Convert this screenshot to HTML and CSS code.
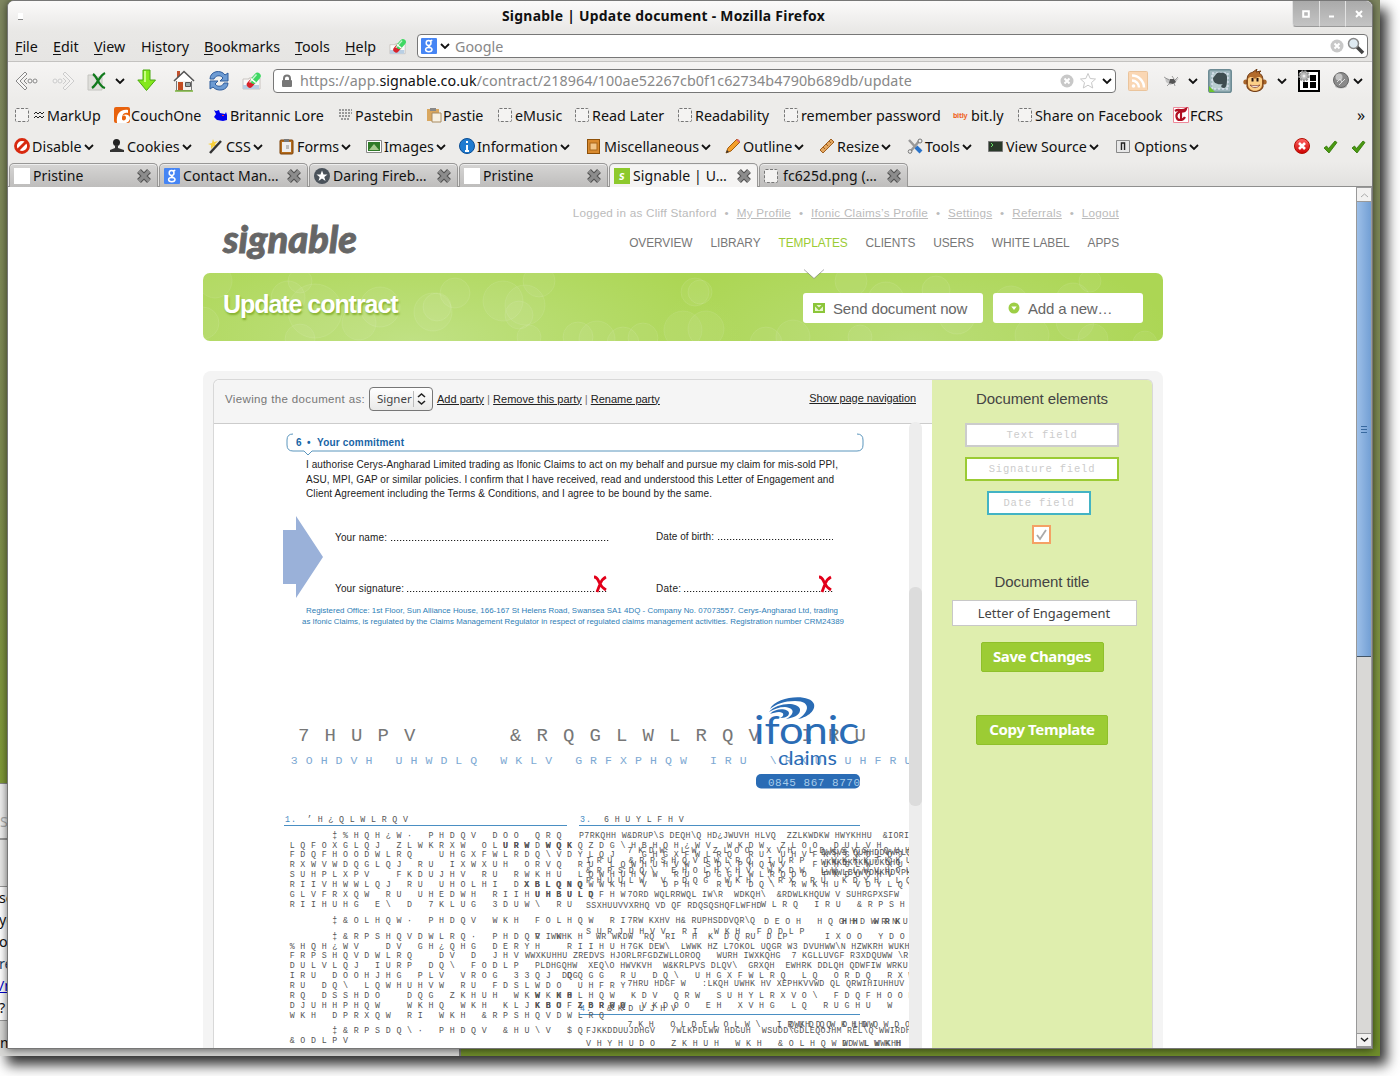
FILE: index.html
```html
<!DOCTYPE html>
<html lang="en">
<head>
<meta charset="utf-8">
<title>Signable | Update document</title>
<link rel="stylesheet" href="styles.css">
</head>
<body>
<svg class="defs" width="0" height="0">
  <defs>
    <linearGradient id="red" x2="0" y2="1"><stop stop-color="#f66"/><stop offset="1" stop-color="#c00"/></linearGradient>
    <symbol id="dash" viewBox="0 0 16 16"><rect x=".5" y="1.5" width="13" height="13" rx="1" fill="#f4f3f2" stroke="#777" stroke-dasharray="3 1.5"/></symbol>
    <symbol id="chev" viewBox="0 0 10 8"><path d="M1 2l4 4 4-4" fill="none" stroke="#111" stroke-width="1.8"/></symbol>
    <symbol id="x" viewBox="0 0 16 16"><path d="M3 3l10 10M13 3L3 13" stroke="#505050" stroke-width="5.4"/><path d="M3 3l10 10M13 3l-10 10" stroke="#8c8c8c" stroke-width="3.4"/></symbol>
    <symbol id="pill" viewBox="0 0 20 18"><path d="M1 7h6v-1h11v11H1z" fill="#fafafa" stroke="#c9c4c0"/><path d="M1 13h16v4H1z" fill="#b9cfe4"/><path d="M8 12.500l3-3.500" stroke="#d8232a" stroke-width="6.500" stroke-linecap="round"/><path d="M11.500 8.500l4-4.500" stroke="#3fd862" stroke-width="6.500" stroke-linecap="round"/><path d="M8.700 6.700l5 4" stroke="#fff" stroke-width="1.500"/><path d="M7.500 10.500l7-8" stroke="#fff" stroke-opacity=".7" stroke-width="1.500"/></symbol>
    <symbol id="g" viewBox="0 0 16 16"><rect width="16" height="16" rx="1" fill="#4685f4"/><g fill="none" stroke="#fff" stroke-width="1.5"><circle cx="7.6" cy="5" r="2.4"/><ellipse cx="7.8" cy="11.6" rx="3.2" ry="2.2"/><path d="M9 3l2.3-.8M8 7.4c-2 1 .8 1 1.6 2.4"/></g></symbol>
    <symbol id="clear" viewBox="0 0 14 14"><circle cx="7" cy="7" r="6.5" fill="#c8c8c8"/><path d="M4.5 4.5l5 5M9.5 4.5l-5 5" stroke="#fff" stroke-width="2"/></symbol>
    <symbol id="tick" viewBox="0 0 16 16"><path d="M2 9l2.5-2 2 2.5L13 2l2 1.5L7 14z" fill="#4b9a12" stroke="#2f7404" stroke-width=".8"/></symbol>
  </defs>
</svg>
<div class="desktop">
  <div class="back-window">
    <div class="back-head"><span>S</span></div>
    <div class="back-tools"></div>
    <div class="back-text"><p>se</p><p>yo</p><p>op</p><p class="blue">re</p><p class="link">/m</p><p>?</p></div>
    <div class="back-foot">m</div>
  </div>
  <main class="window">
    <header class="titlebar">
      <i class="app-dot"></i>
      <b>Signable | Update document - Mozilla Firefox</b>
      <div class="controls"><span><svg width="8" height="8"><path d="M1.2 1.2h5.6v5.6H1.2z" fill="none" stroke="#fff" stroke-width="2"/></svg></span><span><svg width="8" height="8"><path d="M1 6.5h5" stroke="#fff" stroke-width="2"/></svg></span><span><svg width="8" height="8"><path d="M1 1l6 6M7 1L1 7" stroke="#fff" stroke-width="2"/></svg></span></div>
    </header>
    <nav class="menubar">
      <span><u>F</u>ile</span><span><u>E</u>dit</span><span><u>V</u>iew</span><span>Hi<u>s</u>tory</span><span><u>B</u>ookmarks</span><span><u>T</u>ools</span><span><u>H</u>elp</span>
      <svg width="18" height="17"><use href="#pill"/></svg>
      <div class="search"><svg width="16" height="16"><use href="#g"/></svg><svg width="10" height="8"><use href="#chev"/></svg><span>Google</span><svg class="push" width="14" height="14"><use href="#clear"/></svg>
        <svg width="18" height="18"><path d="M10 10l6 6" stroke="#444" stroke-width="3.5"/><circle cx="6.5" cy="6.5" r="5" fill="#dfeaf2" stroke="#888" stroke-width="1.5"/></svg></div>
    </nav>
    <div class="navbar">
      <svg width="24" height="22" viewBox="0 0 24 22" fill="#f7f6f5" stroke="#888"><path d="M10 2L1 11l9 9 2-2-7-7 7-7z"/><path d="M12 8l-3 3 3 3" fill="none"/><circle cx="15" cy="11" r="2"/><circle cx="20" cy="11" r="2"/></svg>
      <svg width="24" height="22" viewBox="0 0 24 22" fill="#f4f3f2" stroke="#ccc"><path d="M13 2l9 9-9 9-2-2 7-7-7-7z"/><path d="M11 8l3 3-3 3" fill="none"/><circle cx="8" cy="11" r="2"/><circle cx="3" cy="11" r="2"/></svg>
      <svg width="20" height="22"><path d="M1 5h5l1 2h8v13H1z" fill="#dfdfdb" stroke="#c4c4c0"/><path d="M6 4c5 3 5 12 12 14M18 3C12 6 11 14 5 18" fill="none" stroke="#117a1d" stroke-width="2.3"/></svg>
      <svg width="10" height="8"><use href="#chev"/></svg>
      <svg width="20" height="24"><path d="M6 1h7v10h5.500L9.500 21.500.8 11H6z" fill="#84e81c" stroke="#4aa910"/><path d="M8 2v11" stroke="#c8ff80" stroke-width="2"/></svg>
      <svg width="22" height="22"><path d="M4 1h3v6H4z" fill="#c0522f"/><path d="M3.500 10h15v10.500h-15z" fill="#f5f3ee" stroke="#777"/><path d="M1 11l10-9.500L21 11" fill="#fff" stroke="#555" stroke-width="1.600"/><path d="M5 12h5v8H5z" fill="#c34e22"/><path d="M12.500 12.500h5v4h-5z" fill="#9aa" stroke="#555"/><path d="M2 21h18" stroke="#7bb33c" stroke-width="1.500"/></svg>
      <svg width="22" height="22"><g fill="#6d9bd3" stroke="#2f5c9c"><path d="M2 9c0-8 11-10 15-4l3-2v8h-8l3-3c-3-4-8-2-9 1z"/><path d="M20 13c0 8-11 9-15 4l-3 2v-8h8l-3 3c3 4 8 2 9-1z"/></g></svg>
      <svg width="20" height="22"><use href="#pill"/></svg>
      <div class="urlbar"><svg width="12" height="14"><path d="M3 7V4.500a3 3 0 0 1 6 0V7" fill="none" stroke="#777" stroke-width="2"/><rect x="1" y="6" width="10" height="7" rx="1" fill="#777"/></svg>
        <span class="url">https://app.<em>signable.co.uk</em>/contract/218964/100ae52267cb0f1c62734b4790b689db/update</span>
        <svg class="push" width="14" height="14"><use href="#clear"/></svg><svg width="18" height="18"><path d="M9 1.500l2.200 5 5.300.5-4 3.600 1.200 5.400L9 13.200 4.300 16l1.200-5.400-4-3.600 5.300-.5z" fill="#fff" stroke="#c8c8c8"/></svg><svg width="10" height="8"><use href="#chev"/></svg></div>
      <svg width="20" height="20"><rect x=".5" y=".5" width="19" height="19" rx="1" fill="#fad7b4" stroke="#eac49c"/><g fill="none" stroke="#fff" stroke-width="2.500"><path d="M4 9.500a7 7 0 0 1 7 7M4 4.500a12 12 0 0 1 12 12"/></g><circle cx="5.500" cy="15" r="1.800" fill="#fff"/></svg>
      <svg width="18" height="16"><path d="M2 5l9 2 5-2-4 5-5 2-4-3z" fill="#c4c4c4"/><path d="M7 6l4 0 2 3-3 2-4-1z" fill="#555"/><path d="M1 4l5 3M9 3l2 3M15 4l-3 3M4 13l3-3M12 13l-1-3" stroke="#888" stroke-width=".8"/></svg>
      <svg width="10" height="8"><use href="#chev"/></svg>
      <svg width="24" height="24"><rect x=".8" y=".8" width="22.400" height="22.400" rx="2" fill="#9fb7bd" stroke="#6d8b94" stroke-width="1.600"/><rect x="4" y="4" width="16" height="16" fill="#b9cdd1" stroke="#eef" stroke-dasharray="2 2"/><path d="M5 9l4-5c6-1 10 0 10 4 0 5 0 11-3 11-4 0-3-3-1-4-6 1-10-1-10-6z" fill="#3f4d50"/><path d="M1 23v-6l6 6z" fill="#6cc52e"/></svg>
      <svg width="24" height="24"><circle cx="2.800" cy="13" r="2.500" fill="#a8662b"/><circle cx="21.200" cy="13" r="2.500" fill="#a8662b"/><path d="M4 12C4 3 9 4 10 3l4-3-1 3 5-1-2 2c4 2 4 6 4 9v5c-2 6-14 6-16 0z" fill="#b26b2c" stroke="#6c3913"/><path d="M5 10c2-3 5-2 7 0 2-2 5-3 7 0v5c0 9-14 9-14 0z" fill="#fbcf88"/><path d="M9.500 9v3.500M14.500 9v3.500" stroke="#211" stroke-width="2"/><path d="M7 16c3 3.500 7 3.500 10 0-2.500 1-7.500 1-10 0z" fill="#fff" stroke="#843" stroke-width=".8"/></svg>
      <svg width="10" height="8"><use href="#chev"/></svg>
      <svg width="22" height="22"><rect x="1" y="1" width="20" height="20" fill="#fff" stroke="#000" stroke-width="2"/><path d="M5 12h5v6H5zm7-7h6v6h-6zm0 7h6v6h-6z"/><circle cx="6" cy="6" r="4.500" fill="#bbb" stroke="#999" stroke-width="2.500" stroke-dasharray="2 1"/><circle cx="6" cy="6" r="1.500" fill="#eee"/></svg>
      <svg width="16" height="18"><ellipse cx="8" cy="14" rx="6" ry="2.500" fill="#bbb"/><circle cx="8" cy="8" r="7.500" fill="#8a8a8a" stroke="#666"/><circle cx="6" cy="5" r="3.500" fill="#c5c5c5"/><path d="M4 10l3-3 2 3 3-3M6 13l3-3" stroke="#ddd" fill="none"/></svg>
      <svg width="10" height="8"><use href="#chev"/></svg>
    </div>
    <div class="bookmarks">
      <span><svg width="16" height="16"><use href="#dash"/></svg><svg width="14" height="10"><path d="M2 4l2-2 2 2 2-2 2 2 2-2M2 8l2-2 2 2 2-2 2 2 2-2" fill="none" stroke="#222"/></svg>MarkUp</span>
      <span><svg width="16" height="16"><rect width="16" height="16" rx="2" fill="#e8620d"/><path d="M3 16C2 7 6 2 14 3v3C8 5 8 10 8 12s4 2 4-1-3-3-4-1c1-4 8-3 8 1 0 3-3 5-5 5z" fill="#fff"/></svg>CouchOne</span>
      <span><svg width="16" height="16"><path d="M1 3l2 1 3-1 1 3 5 1 1-2 1 3v5l-4 1-6-1-3-3 2-3z" fill="#00e"/><path d="M9 8h2v1H9z" fill="#f33"/></svg>Britannic Lore</span>
      <span><svg width="16" height="16"><path d="M1 3h13M1 6h13M1 9h12M3 12h8" stroke="#999" stroke-width="2" stroke-dasharray="2 1"/></svg>Pastebin</span>
      <span><svg width="16" height="16"><path d="M1 2h12v12H1z" fill="#d9a75f"/><path d="M4 1h6v3H4z" fill="#888"/><path d="M6 6h9v9H6z" fill="#f7f1e4" stroke="#a98b60"/></svg>Pastie</span>
      <span><svg width="16" height="16"><use href="#dash"/></svg>eMusic</span>
      <span><svg width="16" height="16"><use href="#dash"/></svg>Read Later</span>
      <span><svg width="16" height="16"><use href="#dash"/></svg>Readability</span>
      <span><svg width="16" height="16"><use href="#dash"/></svg>remember password</span>
      <span><b class="bitly">bitly</b>bit.ly</span>
      <span><svg width="16" height="16"><use href="#dash"/></svg>Share on Facebook</span>
      <span><svg width="16" height="16"><path d="M.5.500h15v15H.5z" fill="#fff" stroke="#e89"/><path d="M2 4c4-3 6 1 11-2-1 4-5 2-7 3-4 2-3 8 1 8 2 0 4-1 5-3M8 5v8" fill="none" stroke="#b10f22" stroke-width="2.200"/></svg>FCRS</span>
      <span class="more">»</span>
    </div>
    <div class="devbar">
      <span><svg width="17" height="17"><circle cx="8" cy="8" r="6.500" fill="#fff" stroke="#d8290f" stroke-width="2.800"/><path d="M3.500 12.500l9-9" stroke="#d8290f" stroke-width="2.800"/></svg>Disable<svg class="c" width="10" height="8"><use href="#chev"/></svg></span>
      <span><svg width="17" height="17"><circle cx="7.500" cy="4.500" r="3.500" fill="#222"/><path d="M6 7h3v3l6 2v2H1v-2l5-2z" fill="#333"/></svg>Cookies<svg class="c" width="10" height="8"><use href="#chev"/></svg></span>
      <span><svg width="17" height="17"><path d="M5 1l1 3 4-1-3 3 2 3-3-1-3 3v-4L0 6l4-1z" fill="#f7cf3a"/><path d="M2 15L13 3" stroke="#333" stroke-width="2.500"/></svg>CSS<svg class="c" width="10" height="8"><use href="#chev"/></svg></span>
      <span><svg width="17" height="17"><rect x="1" y="2" width="13" height="14" rx="1" fill="#b56c1c" stroke="#7c4208"/><path d="M3 4h9v10H3z" fill="#eee"/><path d="M5 1h5v3H5z" fill="#777"/><path d="M7 7h3v4H7z" fill="#bbb"/></svg>Forms<svg class="c" width="10" height="8"><use href="#chev"/></svg></span>
      <span><svg width="17" height="17"><path d="M.5 2.500h15v12H.5z" fill="#fff" stroke="#888"/><path d="M2 4h12v9H2z" fill="#2f7a27"/><path d="M3 12l5-6 5 6z" fill="#a6c98e"/></svg>Images<svg class="c" width="10" height="8"><use href="#chev"/></svg></span>
      <span><svg width="17" height="17"><circle cx="8" cy="8" r="7.500" fill="#1f7bd0" stroke="#0b4d93"/><path d="M8 3v2M8 7v6M6 13h4" stroke="#fff" stroke-width="2"/></svg>Information<svg class="c" width="10" height="8"><use href="#chev"/></svg></span>
      <span><svg width="17" height="17"><rect x="1.500" y="1.500" width="12" height="14" fill="#d98a2e" stroke="#8e5008"/><rect x="4" y="5" width="7" height="7" fill="#f2c587" stroke="#a9671a"/></svg>Miscellaneous<svg class="c" width="10" height="8"><use href="#chev"/></svg></span>
      <span><svg width="17" height="17"><path d="M1 15l2-5 9-9 3 3-9 9z" fill="#f4a02c" stroke="#a45c0d"/><path d="M11 2l2-1 2 2-1 2z" fill="#dc6a70"/><path d="M1 15l1-3 2 2z" fill="#333"/></svg>Outline<svg class="c" width="10" height="8"><use href="#chev"/></svg></span>
      <span><svg width="17" height="17"><path d="M1 12L12 1l3 3L4 15z" fill="#e2a660" stroke="#a06020"/><path d="M4 9l2 2M7 6l2 2M10 3l2 2" stroke="#a06020"/></svg>Resize<svg class="c" width="10" height="8"><use href="#chev"/></svg></span>
      <span><svg width="17" height="17"><path d="M2 2l11 12M13 2L3 14" stroke="#999" stroke-width="2.500"/><path d="M9 9l5 5" stroke="#2a73c9" stroke-width="4"/><circle cx="13" cy="3" r="2" fill="#eee" stroke="#777"/><circle cx="3" cy="13.500" r="1.800" fill="#eee" stroke="#777"/></svg>Tools<svg class="c" width="10" height="8"><use href="#chev"/></svg></span>
      <span><svg width="17" height="17"><path d="M.5 3.500h14v10H.5z" fill="#2a392a" stroke="#777"/><path d="M3 5l2 2-2 2" stroke="#6d6" fill="none"/></svg>View Source<svg class="c" width="10" height="8"><use href="#chev"/></svg></span>
      <span><svg width="17" height="17"><path d="M.5 2.500h13v12H.5z" fill="#e8e8e8" stroke="#888"/><path d="M5.500 12V5h3v7" fill="#fff" stroke="#222" stroke-width="1.500"/></svg>Options<svg class="c" width="10" height="8"><use href="#chev"/></svg></span>
      <span><svg width="17" height="17"><circle cx="8" cy="8" r="7.500" fill="url(#red)" stroke="#b20e00"/><path d="M5 5l6 6M11 5l-6 6" stroke="#fff" stroke-width="2.600"/></svg></span>
      <span><svg width="16" height="16"><use href="#tick"/></svg></span>
      <span><svg width="16" height="16"><use href="#tick"/></svg></span>
    </div>
    <div class="tabs">
      <div><i class="blank"></i><span>Pristine</span><svg width="16" height="16"><use href="#x"/></svg></div>
      <div><svg width="16" height="16"><use href="#g"/></svg><span>Contact Man…</span><svg width="16" height="16"><use href="#x"/></svg></div>
      <div><svg width="16" height="16"><circle cx="8" cy="8" r="8" fill="#4a525a"/><path d="M8 2.500l1.500 4h4L10.300 9l1.200 4L8 10.600 4.500 13l1.200-4-3.200-2.500h4z" fill="#fff"/></svg><span>Daring Fireb…</span><svg width="16" height="16"><use href="#x"/></svg></div>
      <div><i class="blank"></i><span>Pristine</span><svg width="16" height="16"><use href="#x"/></svg></div>
      <div class="active"><i class="sfav">s</i><span>Signable | U…</span><svg width="16" height="16"><use href="#x"/></svg></div>
      <div><svg width="16" height="16"><use href="#dash"/></svg><span>fc625d.png (…</span><svg width="16" height="16"><use href="#x"/></svg></div>
    </div>
    <div class="viewport">
      <div class="page">
        <div class="site-head">
          <svg class="logo" width="140" height="50"><text x="1" y="34" textLength="134" lengthAdjust="spacingAndGlyphs">signable</text></svg>
          <div class="navs">
            <div class="account"><span>Logged in as Cliff Stanford</span><i>•</i><a>My Profile</a><i>•</i><a>Ifonic Claims’s Profile</a><i>•</i><a>Settings</a><i>•</i><a>Referrals</a><i>•</i><a>Logout</a></div>
            <div class="sections"><span>OVERVIEW</span><span>LIBRARY</span><span class="on">TEMPLATES</span><span>CLIENTS</span><span>USERS</span><span>WHITE LABEL</span><span>APPS</span></div>
          </div>
        </div>
        <div class="banner">
          <svg class="bokeh" width="960" height="68"><g fill="#fff" fill-opacity=".05" stroke="#fff" stroke-opacity=".09"><circle cx="12" cy="8" r="17"/><circle cx="0" cy="50" r="16"/><circle cx="97" cy="8" r="12"/><circle cx="85" cy="25" r="17"/><circle cx="112" cy="38" r="27"/><circle cx="97" cy="66" r="15"/><circle cx="177" cy="34" r="20"/><circle cx="156" cy="50" r="17"/><circle cx="230" cy="39" r="19"/><circle cx="234" cy="34" r="14"/><circle cx="252" cy="20" r="15"/><circle cx="300" cy="28" r="20"/><circle cx="322" cy="32" r="20"/><circle cx="336" cy="8" r="16"/><circle cx="316" cy="42" r="14"/><circle cx="326" cy="64" r="12"/><circle cx="375" cy="64" r="15"/><circle cx="394" cy="66" r="18"/><circle cx="420" cy="70" r="16"/><circle cx="440" cy="65" r="15"/><circle cx="480" cy="57" r="19"/><circle cx="492" cy="19" r="14"/><circle cx="497" cy="19" r="12"/><circle cx="503" cy="56" r="18"/><circle cx="563" cy="70" r="16"/><circle cx="590" cy="64" r="17"/><circle cx="648" cy="8" r="16"/><circle cx="683" cy="27" r="18"/><circle cx="657" cy="64" r="12"/><circle cx="733" cy="17" r="14"/><circle cx="754" cy="43" r="18"/><circle cx="808" cy="31" r="18"/><circle cx="870" cy="27" r="17"/><circle cx="887" cy="8" r="11"/><circle cx="872" cy="48" r="19"/><circle cx="829" cy="62" r="17"/><circle cx="890" cy="66" r="15"/><circle cx="942" cy="70" r="12"/></g></svg>
          <svg class="notch" width="22" height="11"><path d="M1 0l10 9.500L21 0z" fill="#fff"/><path d="M1 .5l10 9 10-9" fill="none" stroke="#777" stroke-opacity=".6"/></svg>
          <h1>Update contract</h1>
          <a class="btn send"><svg width="12" height="10"><path d="M1 1h10v8H1z" fill="#e9f5cf" stroke="#8cc63a" stroke-width="2"/><path d="M2 2l4 4 4-4" fill="none" stroke="#8cc63a" stroke-width="2"/></svg>Send document now</a>
          <a class="btn add"><svg width="12" height="12"><circle cx="6" cy="6" r="5.500" fill="#9dce45"/><path d="M3.300 4.500h5.400L6 8z" fill="#fff"/></svg>Add a new…</a>
        </div>
        <div class="panel">
          <div class="inner">
            <section class="doc">
              <div class="doc-bar"><span class="as">Viewing the document as:</span><div class="select"><span>Signer</span><svg width="14" height="16"><path d="M4 6l3.500-3L11 6M4 10l3.500 3L11 10" fill="none" stroke="#222" stroke-width="1.600"/></svg></div><a>Add party</a><s>|</s><a>Remove this party</a><s>|</s><a>Rename party</a><a class="pagenav">Show page navigation</a></div>
              <div class="doc-body">
                <svg class="sheet" width="695" height="624" viewBox="214 424 695 624">
                  <path d="M293 434q-6 0-6 6v5q0 6 6 6h11l4 4 4-4h545q6 0 6-6v-5q0-6-6-6" fill="none" stroke="#5b96bd"/>
                  <g class="head"><text x="296" y="445.500">6</text><text x="307" y="445.500">•</text><text x="317" y="445.500" textLength="87">Your commitment</text></g>
                  <g class="para"><text x="306" y="467.500" textLength="532">I authorise Cerys-Angharad Limited trading as Ifonic Claims to act on my behalf and pursue my claim for mis-sold PPI,</text><text x="306" y="482.500" textLength="528">ASU, MPI, GAP or similar policies. I confirm that I have received, read and understood this Letter of Engagement and</text><text x="306" y="497" textLength="406">Client Agreement including the Terms &amp; Conditions, and I agree to be bound by the same.</text>
                  <text x="335" y="541" textLength="52">Your name:</text><text x="656" y="540" textLength="58">Date of birth:</text><text x="335" y="592" textLength="69">Your signature:</text><text x="656" y="592" textLength="25">Date:</text></g>
                  <g stroke="#222" stroke-width="1.200" stroke-dasharray="1.200 1.800"><path d="M391 540.500h218M718 539.500h115M407 591.500h201M684 591.500h149"/></g>
                  <path d="M283 530h13v-14l27 41-27 41v-14h-13z" fill="#9ab1d9"/>
                  <g fill="none" stroke="#e2001a" stroke-width="2.800"><path d="M594 577q3 0 5 5t7 8M606 577q-4 2-6 7l-3 8M819 577q3 0 5 5t7 8M831 577q-4 2-6 7l-3 8"/></g>
                  <g class="reg"><text x="306" y="613" textLength="532">Registered Office: 1st Floor, Sun Alliance House, 166-167 St Helens Road, Swansea SA1 4DQ - Company No. 07073557. Cerys-Angharad Ltd, trading</text><text x="302" y="623.500" textLength="542">as Ifonic Claims, is regulated by the Claims Management Regulator in respect of regulated claims management activities. Registration number CRM24389</text></g>
                  <text class="t1" x="298" y="741">7HUPV   &amp;RQGLWLRQV IRU</text>
                  <text class="t2" x="290.700" y="764">3OHDVH UHWDLQ WKLV GRFXPHQW IRU \RXU UHFRUGV</text>
                  <g fill="#2a6cb5"><path d="M770 709c6-13 40-16 44-5 2 8-9 14-16 15 10-5 15-18-3-18-11 0-19 3-25 8z"/><path d="M769 712c7-9 28-11 31-3 1 6-7 9-14 10 8-4 10-11-1-12-6 0-11 2-16 5z"/><path d="M770 714c5-6 18-6 19-1 0 4-5 5-9 5 5-2 4-6-1-6-3 0-6 1-9 2z"/></g>
                  <text class="ifonic" x="754" y="744" textLength="105" lengthAdjust="spacingAndGlyphs">ifonic</text><text class="claims" x="778" y="765" textLength="59" lengthAdjust="spacingAndGlyphs">claims</text>
                  <rect x="756" y="774" width="104" height="14.500" rx="5" fill="#2a6cb5"/><text class="phone" x="768" y="785.500" textLength="92">0845 867 8770</text>
                  <path d="M284 825.500h283M579 825.500h281M579 1014.500h281" stroke="#4a8fc3"/>
                  <g class="body"><text class="blue" x="285" y="822" textLength="11">1.</text><text x="307" y="822">’H¿QLWLRQV</text><text class="blue" x="580" y="822" textLength="11">3.</text><text x="604" y="822">6HUYLFHV</text>
                  <text x="289.700" y="837.500">    ‡%HQH¿W· PHDQV DOO QRQ</text>
                  <text x="289.700" y="847.500">LQFOXGLQJ ZLWKRXW OLURWDWQKQZDG\HBHQH¿WV WKDW ZLOO DULVH</text>
                  <text x="289.700" y="857.300">FDQFHOODWLRQ  UHGXFWLRDQ\VDYLQJ  GHGXFWLRQ RU UHVFKHGXOLQJ</text>
                  <text x="289.700" y="867.200">RXWVWDQGLQJ RU IXWXUH ORVQ RU LQWHUHVW SD\PHQWV  FUHGLW XUH</text>
                  <text x="289.700" y="877">SUHPLXPV  FKDUJHV RU RWKHU LQWHUHVW RU DGGLWLRQDO FKDUJHV SD</text>
                  <text x="289.700" y="887">RIIVHWWLQJ RU UHOLHI DXBLQNQWWKH V DPH  RU DQ\ RWKHU VDYLQJ</text>
                  <text x="289.700" y="897">GLVFRXQW RU UHEDWH RIIHUHBULQFHW</text>
                  <text x="289.700" y="906.700">RIIHUHG E\ D 7KLUG 3DUW\ RU</text>
                  <text x="289.700" y="922.500">    ‡&amp;OLHQW· PHDQV WKH FOLHQW RI</text>
                  <text x="289.700" y="938.500">    ‡&amp;RPSHQVDWLRQ· PHDQV WKH</text>
                  <text x="289.700" y="948.500">%HQH¿WV  DV GH¿QHG DERYH  RIIHUH</text>
                  <text x="289.700" y="958.200">FRPSHQVDWLRQ  DV D JHV</text>
                  <text x="289.700" y="968.200">DULVLQJ IURP DQ\ FODLP</text>
                  <text x="289.700" y="978.200">IRU DOOHJHG PLV VROG 33QJ DQGG RU DQ\ UHGXFWLRQ LQ ORDQ RXWV</text>
                  <text x="289.700" y="988">RU DQ\ LQWHUHVW RU FDSLWDO UHFRY</text>
                  <text x="289.700" y="998">RQ DSSHDO  DQG ZKHUH WKWKHOLHQW KDV QRW SUHYLRXVO\ FDQFHOOHG</text>
                  <text x="289.700" y="1007.700">DJUHHPHQW  WKHQ WKH KLJKHUFXDRQW VKDOO EH XVHG LQ RUGHU W</text>
                  <text x="289.700" y="1017.700">WKH DPRXQW RI WKH &amp;RPSHQVDWLRQ</text>
                  <text x="289.700" y="1033.300">    ‡&amp;RPSDQ\· PHDQV &amp;HU\V $Q</text>
                  <text x="289.700" y="1043">&amp;ODLPV</text>
                  <text x="627.500" y="852.700">7KDW LW ZLOO XVH LDWSVS QUHH</text>
                  <text x="586" y="863">IRU &amp;RPSHQVDWLRQ IURP  WKKK7KKUGJ</text>
                  <text x="586" y="873">&amp;RPSDQ\ EHOLHYHV WKDW LW LWVHOU VSWD</text>
                  <text x="586" y="883">PHUULW V DQG WKH \RX RU KDYH LQJ</text>
                  <text x="761" y="906.700">WLRQ IRU &amp;RPSHQ</text>
                  <text x="764" y="924">DEOH HQGHDWRNU</text>
                  <text x="586" y="934">SURJUHVV RI WKH FODLP</text>
                  <text x="825" y="938.500">IXOO YDO</text>
                  <text x="607" y="1011">&amp;KDUJHV</text><text class="blue" x="580" y="1011" textLength="11">4.</text>
                  <text x="627.500" y="1026.500">7KH OLDELOLW\ IRUDQWKHDQWDOLHW</text>
                  <text x="586" y="1046">VHYHUDO ZKHUH WKH &amp;OLHQWDWLWKH</text></g>
                  <g class="body dense"><text x="579" y="837.500">P7RKQHH W&amp;DRUP\S DEQH\Q HD¿JWUVH HLVQ  ZZLKWDKW HWYKHHU  &amp;IORI</text>
                  <text x="821" y="854.500">DWSVS QUHHDDVWRLQJ</text><text x="821" y="864.500">WKKKBK7KKUUKUHG</text><text x="821" y="874.500">LWWWLBVWVDHKHD\PH</text>
                  <text x="627.500" y="897">7ORD WQLRRWQL IW\R  WDKQH\  &amp;RDWLKHQUW V SUHRGPXSFW</text>
                  <text x="586" y="908">SSXHUUVVXRHQ VD QF RDQSQSHQFLWFHD</text>
                  <text x="627.500" y="922.500">7RW KXHV H&amp; RUPHSDDVQR\Q</text>
                  <text x="535" y="938.500">R IWKH</text><text x="596" y="938.500">WR WKDW  RQ  RI   H  K  D Q RU  D LP</text>
                  <text x="627.500" y="948.500">7GK DEW\  LWWK HZ L7OKOL UQGR W3 DVUHWW\N HZWKRH WUKH</text>
                  <text x="525" y="958.200">WWXKUHHU ZREDVS HJORLRFGDZWLLOROQ   WURH IWXKQHG  7 KGLLUVGF R3XDQUWW \R</text>
                  <text x="535" y="968.200">PLDHGQHW  XEQ\O HWVKVH  W&amp;KRLPVS DLQV\  GRXQH  EWHRK DDLQH QDWFIW WRKU</text>
                  <text x="562" y="978.200">DQG</text><text x="627.500" y="986">7HRU HDGF W   :LKQH UWHK HV XEPHKVVWD QL QRWIHIUHHUV W</text>
                  <text x="789" y="1026.500">QWKH D Q  D LHWW</text><text x="586" y="1033.300">FJKKDDUUJDHGV   /WLKPDLWW HDGUH  WSUDD\GDLEQOJHM REL\Q WWIRDH</text>
                  <text x="843" y="1046">WD WL WWKHH</text></g>
                  <g class="body strong"><text x="503" y="847.500">URW WQK</text><text x="524" y="887">XBLQNQ</text><text x="535" y="897">UHBULD</text><text x="535" y="998">W KH</text><text x="535" y="1007.700">KBO ZBRWQ</text><text x="842" y="924">HH WRK</text></g>
                </svg>
                <div class="track"><div class="thumb"></div></div>
              </div>
            </section>
            <aside class="side">
              <h2>Document elements</h2>
              <div class="f text">Text field</div><div class="f sign">Signature field</div><div class="f date">Date field</div>
              <div class="check"><svg width="13" height="13"><path d="M2 7l3 4 6-9" fill="none" stroke="#aaa" stroke-width="1.800"/></svg></div>
              <h2 class="second">Document title</h2>
              <div class="title-input">Letter of Engagement</div>
              <div class="green save">Save Changes</div><div class="green copy">Copy Template</div>
            </aside>
          </div>
        </div>
      </div>
      <div class="scroll"><span class="arrow"><svg width="9" height="6"><path d="M1 5l3.500-3L8 5" fill="none" stroke="#aaa"/></svg></span><div class="grip"><i></i><i></i><i></i></div><span class="arrow down"><svg width="9" height="6"><path d="M1 1l3.500 3L8 1" fill="none" stroke="#222" stroke-width="1.500"/></svg></span></div>
    </div>
  </main>
</div>
</body>
</html>
```

FILE: styles.css
```css
* { box-sizing: border-box; }
body { margin: 0; width: 1400px; height: 1076px; overflow: hidden; background: #fff; font: 14.3px "Noto Sans", sans-serif; color: #111; }
svg { display: block; flex: none; }
.defs { position: absolute; }
.desktop { position: relative; width: 1380px; height: 1056px; background: linear-gradient(#7f8760, #7d8a50 45%, #809b36 75%, #6f8d2b); box-shadow: 7px 9px 12px 0 rgba(0,0,0,.8); }
.back-window { position: absolute; left: 0; top: 783px; width: 461px; height: 273px; background: #fff; overflow: hidden; border-top: 1px solid #888; border-right: 2px solid #777; }
.back-head { height: 56px; padding: 28px 0 0; background: #eee; border-bottom: 2px solid #999; color: #aaa; }
.back-tools { height: 47px; background: #e8e8e7; border-bottom: 1px solid #999; }
.back-text { height: 134px; border-bottom: 1px solid #999; }
.back-text p { margin: 0 0 0 -1px; height: 22px; line-height: 22px; }
.back-text .blue { color: #246; }
.back-text .link { color: #00c; text-decoration: underline; }
.back-foot { padding-top: 12px; height: 40px; background: #d8d8d6; }
.window { position: absolute; left: 7px; top: 0; width: 1366px; height: 1049px; border: 1px solid #777; border-radius: 7px 7px 0 0; background: #edecea; box-shadow: 0 1px 9px rgba(0,0,0,.6); overflow: hidden; }

.titlebar { height: 30px; display: flex; align-items: center; justify-content: space-between; background: linear-gradient(#fbfafa, #e9e8e6); }
.titlebar b { font-size: 13.9px; letter-spacing: .27px; padding: 0 0 2px 12px; }
.app-dot { width: 5px; height: 7px; margin-left: 10px; background: #fff; border-bottom: 1px solid #888; }
.controls { display: flex; align-self: flex-start; width: 80px; height: 26px; }
.controls span { flex: 1; display: flex; align-items: center; justify-content: center; background: linear-gradient(#aaa, #c4c4c4); border-left: 1px solid #e2e2e2; border-bottom: 1px solid #999; }
.controls span:first-child { border-bottom-left-radius: 4px; }

.menubar { height: 31px; padding-left: 7px; display: grid; grid-template-columns: 38px 41px 47px 63px 91px 50px 44px 28px 951px; align-items: center; border-bottom: 1px solid #c3c2c0; background: linear-gradient(#e9e8e6, #e6e5e3); white-space: nowrap; }
.menubar u { text-underline-offset: 2px; text-decoration-thickness: 1px; }
.search { height: 24px; display: flex; align-items: center; gap: 3px; padding: 0 2px 0 3px; border: 1px solid #777; border-radius: 4px; background: #fff; color: #888; }
.search span { padding-left: 2px; }
.push { margin-left: auto; }
.navbar { height: 37px; padding-left: 7px; display: grid; grid-template-columns: 37px 35px 28px 22px 36px 35px 34px 31px 855px 35px 25px 20px 35px 34px 21px 35px 20px 12px; align-items: center; background: linear-gradient(#f5f4f3, #edecea); }
.urlbar { width: 843px; height: 24px; display: flex; align-items: center; gap: 5px; padding: 0 3px 0 7px; border: 1px solid #777; border-radius: 4px; background: #fff; color: #888; }
.urlbar .url { padding-left: 2px; letter-spacing: .06px; }
.urlbar em { font-style: normal; color: #111; }
.bookmarks, .devbar { display: grid; align-items: center; padding-left: 7px; white-space: nowrap; }
.bookmarks { height: 33px; padding-bottom: 1px; grid-template-columns: 99px 99px 125px 88px 72px 77px 103px 106px 169px 65px 155px 184px 12px; }
.bookmarks span, .devbar span { display: flex; align-items: center; gap: 1px; }
.bitly { width: 17px; font-size: 7px; letter-spacing: -.3px; color: #ef6426; }
.more { font-size: 16px; }
.devbar { height: 30px; padding-left: 6px; padding-bottom: 1px; grid-template-columns: 95px 99px 71px 87px 93px 127px 139px 94px 88px 81px 128px 178px 28px 28px 18px; }
.devbar .c { margin-left: 1px; }
.tabs { height: 25px; display: flex; gap: 1px; padding: 1px 1px 0; border-bottom: 1px solid #8f8f8e; background: linear-gradient(#edecea, #e2e1df); }
.tabs div { width: 149px; height: 24px; display: flex; align-items: center; padding: 0 5px 0 4px; border: 1px solid #989796; border-bottom: 0; border-radius: 5px 5px 0 0; background: linear-gradient(#d6d5d4, #bebdbc); box-shadow: inset 0 1px #eee; }
.tabs .active { background: #f5f4f3; }
.tabs span { flex: 1; margin-left: 3px; white-space: nowrap; font-size: 14px; letter-spacing: .1px; }
.blank { width: 16px; height: 16px; background: #fff; }
.sfav { width: 16px; height: 16px; background: #8dc92c; color: #fff; font: italic 900 13px/14px Lato, sans-serif; text-align: center; }

.viewport { height: 861px; display: flex; background: #fff; }
.page { width: 960px; margin: 0 auto 0 195px; font-family: "Liberation Sans", Arial, sans-serif; }
.site-head { height: 86px; display: flex; justify-content: space-between; padding: 18px 44px 0 19px; }
.logo { margin-top: 14px; }
.logo text { font: italic 900 37px Lato, sans-serif; fill: #666; stroke: #666; stroke-width: .8; }
.account { display: flex; justify-content: flex-end; font-size: 11.700px; letter-spacing: .240px; color: #bbb; line-height: 16px; white-space: nowrap; }
.account i { width: 20px; text-align: center; font-style: normal; }
.account a { text-decoration: underline; }
.navs { width: 560px; }
.sections { display: flex; justify-content: flex-end; gap: 18px; margin-top: 14px; font-size: 11.900px; letter-spacing: -.080px; line-height: 16px; color: #777; white-space: nowrap; }
.sections .on { color: #9bcb34; }
.banner { position: relative; height: 68px; display: flex; align-items: flex-start; border-radius: 7px; padding: 20px 20px 0; background: radial-gradient(ellipse 330px 110px at 210px 68px, #c0e184, transparent), radial-gradient(ellipse 260px 100px at 710px 68px, #badd78, transparent), #acd654; }
.bokeh, .notch { position: absolute; left: 0; top: 0; }
.bokeh { border-radius: 7px; }
.notch { left: 600px; top: -4px; }
h1 { position: relative; margin: -3px auto 0 0; font-size: 25px; line-height: 28px; letter-spacing: -1.050px; color: #fff; text-shadow: 1px 2px 2px #86b12e; }
.btn { position: relative; height: 30px; display: flex; align-items: center; background: #fff; border-radius: 3px; color: #666; font-size: 15px; letter-spacing: -.150px; white-space: nowrap; }
.send { width: 180px; padding-left: 10px; gap: 8px; margin-right: 10px; }
.add { width: 150px; padding-left: 15px; gap: 8px; }
.panel { height: 677px; margin-top: 30px; padding: 8px 10px 0; background: #f4f4f4; border-radius: 8px 8px 0 0; }
.inner { height: 669px; display: flex; border: 1px solid #d8d8d8; border-bottom: 0; border-radius: 6px 6px 0 0; }
.doc { width: 718px; background: #fff; border-radius: 6px 0 0; }
.doc-bar { height: 44px; padding: 0 16px 6px 11px; display: flex; align-items: center; font-size: 11.500px; color: #777; background: #f5f5f5; border-bottom: 1px solid #ccc; border-radius: 6px 0 0; white-space: nowrap; }
.as { width: 140px; letter-spacing: .360px; }
.doc-bar a { color: #222; font-size: 11px; text-decoration: underline; }
.doc-bar s { width: 9px; text-align: center; text-decoration: none; }
.select { width: 64px; height: 24px; margin: 0 4px; padding-left: 7px; display: flex; align-items: center; border: 1px solid #777; border-radius: 4px; background: linear-gradient(#fff, #e9e9e8); color: #444; font: 11.500px "Noto Sans", sans-serif; }
.select span { width: 33px; }
.select svg { margin-left: 3px; border-left: 1px solid #bbb; }
.doc-bar .pagenav { margin: -2px 0 0 auto; letter-spacing: -.080px; }
.doc-body { height: 624px; display: flex; }
.sheet { overflow: hidden; font-family: "Liberation Sans", Arial, sans-serif; }
.sheet text { white-space: pre; }
.head text { font-size: 10px; font-weight: bold; fill: #1764a5; }
.para text { font-size: 10px; fill: #222; }
.reg text { font-size: 7.900px; fill: #2d7db5; }
.t1, .t2, .body text, .phone { font-family: "Liberation Mono", "Courier New", monospace; }
.t1 { font-size: 19px; letter-spacing: 15.100px; fill: #777; }
.t2 { font-size: 11.500px; letter-spacing: 8.070px; fill: #7da9d3; }
.ifonic { font: 38px Lato, sans-serif; fill: #2a6cb5; }
.claims { font: 20px Lato, sans-serif; fill: #2a6cb5; }
.sheet .phone { font-size: 11px; fill: #a6cbea; }
.body text { font-size: 8.300px; letter-spacing: 5.690px; fill: #555; }
.body.dense text { letter-spacing: .350px; }
.body.strong text { font-weight: bold; }
.body .blue { fill: #3f8ac2; letter-spacing: 0; }
.track { width: 13px; height: 626px; margin-top: -2px; padding-top: 165px; background: #ededed; border-radius: 6px 6px 0 0; }
.thumb { height: 219px; background: #dcdcdc; border-radius: 6px; }
.side { width: 220px; background: #dfeeae; display: flex; flex-direction: column; align-items: center; border-radius: 0 5px 0 0; }
h2 { margin: 9px 0 14px; font-size: 15px; font-weight: normal; line-height: 20px; letter-spacing: -.080px; color: #444; }
.f { width: 154px; height: 24px; margin-bottom: 10px; border: 2px solid #ccc; background: #fff; text-align: center; font: 10.500px/20px "Liberation Mono", "Courier New", monospace; letter-spacing: .800px; color: #ccc; }
.sign { border-color: #9bcb34; }
.date { width: 104px; margin-right: 6px; border-color: #43b3c4; }
.check { width: 19px; height: 19px; margin-right: 2px; border: 2px solid #f4a165; background: #fff; padding: 1px; }
h2.second { margin: 28px 0 8px; }
.title-input { width: 185px; height: 26px; margin-left: 4px; border: 1px solid #c8c8c8; background: #fff; color: #444; font: 12.900px/24px "Noto Sans", sans-serif; text-align: center; }
.green { margin-top: 16px; height: 30px; width: 123px; background: #9ccc34; border: 1px solid #8fc02b; border-radius: 2px; color: #fff; font: bold 15px/27px "Noto Sans", sans-serif; letter-spacing: -.380px; text-align: center; white-space: nowrap; }
.copy { width: 132px; margin-top: 43px; }
.scroll { width: 16px; height: 861px; display: flex; flex-direction: column; border: 1px solid #999; background: #d9d8d6; }
.arrow { height: 14px; display: flex; align-items: center; justify-content: center; background: #f2f1f0; border-bottom: 1px solid #999; }
.down { margin-top: auto; border-top: 1px solid #999; }
.grip { height: 455px; display: flex; flex-direction: column; align-items: center; justify-content: center; gap: 2px; background: linear-gradient(90deg, #9dbfe8, #729fd4); border-bottom: 1px solid #456; }
.grip i { width: 6px; height: 1px; background: #38699f; }
```
